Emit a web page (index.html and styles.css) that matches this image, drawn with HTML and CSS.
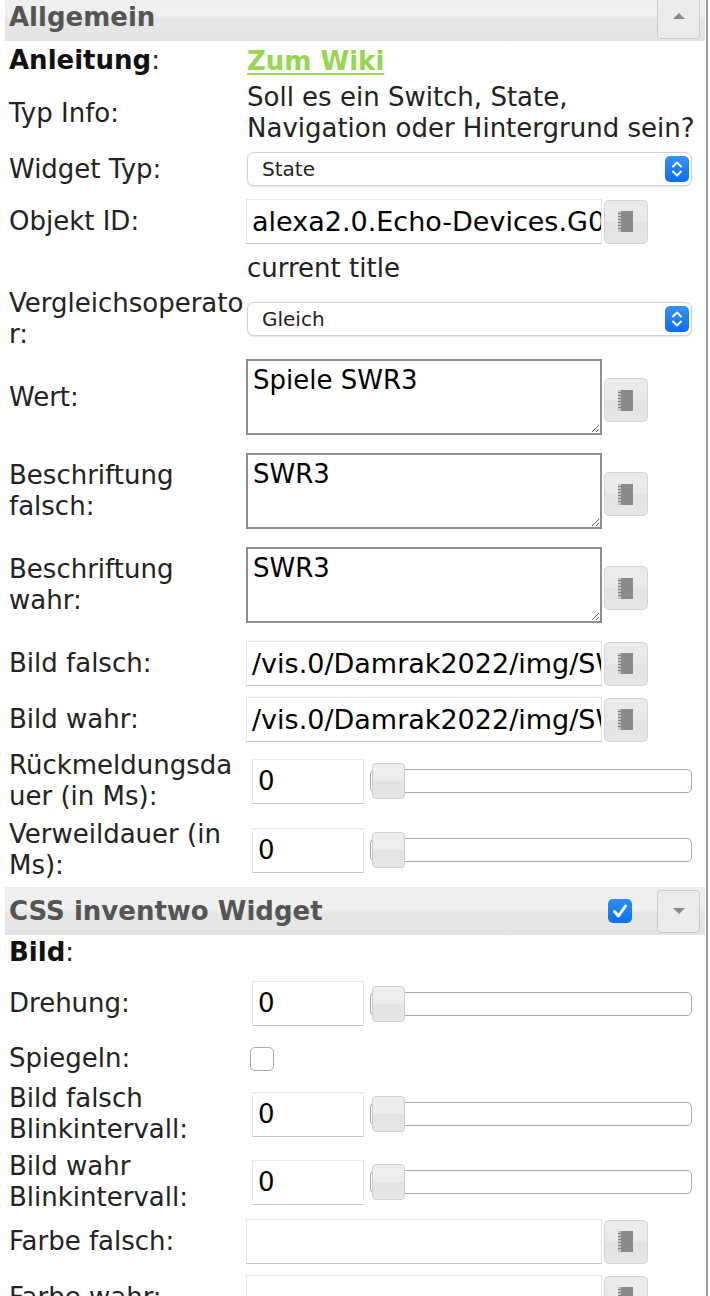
FILE: index.html
```html
<!DOCTYPE html>
<html lang="de">
<head>
<meta charset="utf-8">
<title>Widget Attribute</title>
<link rel="stylesheet" href="styles.css">
</head>
<body>
<div class="page">
  <div class="panel">
    <div class="group-header first">
      <span class="gh-title">Allgemein</span>
      <span class="gh-toggle"><span class="tri tri-up"></span></span>
    </div>

    <div class="row pad-link">
      <div class="lbl"><b>Anleitung</b>:</div>
      <div class="val"><a class="wiki" href="#">Zum Wiki</a></div>
    </div>

    <div class="row pad-2">
      <div class="lbl">Typ Info:</div>
      <div class="val text">Soll es ein Switch, State, Navigation oder Hintergrund sein?</div>
    </div>

    <div class="row pad-6">
      <div class="lbl">Widget Typ:</div>
      <div class="val"><div class="select"><span>State</span><span class="stepper"><svg width="24" height="26" viewBox="0 0 24 26"><polyline points="8,10.5 12,6.5 16,10.5" fill="none" stroke="#fff" stroke-width="2" stroke-linecap="round" stroke-linejoin="round"/><polyline points="8,15.5 12,19.5 16,15.5" fill="none" stroke="#fff" stroke-width="2" stroke-linecap="round" stroke-linejoin="round"/></svg></span></div></div>
    </div>

    <div class="row pad-input">
      <div class="lbl">Objekt ID:</div>
      <div class="val combo"><div class="tinput">alexa2.0.Echo-Devices.G0909A0604150JK0.Player.currentTitle</div><span class="pick"><svg class="book" width="16" height="21" viewBox="0 0 16 21"><rect x="3" y="0" width="12" height="21" fill="#8a8a8a"/><rect x="0" y="0" width="3" height="21" fill="#c4c4c4"/><path d="M0 2.5h3M0 5.5h3M0 8.5h3M0 11.5h3M0 14.5h3M0 17.5h3" stroke="#7e7e7e" stroke-width="1"/></svg></span></div>
    </div>

    <div class="row pad-text">
      <div class="lbl"></div>
      <div class="val text">current title</div>
    </div>

    <div class="row pad-2">
      <div class="lbl">Vergleichsoperator:</div>
      <div class="val"><div class="select"><span>Gleich</span><span class="stepper"><svg width="24" height="26" viewBox="0 0 24 26"><polyline points="8,10.5 12,6.5 16,10.5" fill="none" stroke="#fff" stroke-width="2" stroke-linecap="round" stroke-linejoin="round"/><polyline points="8,15.5 12,19.5 16,15.5" fill="none" stroke="#fff" stroke-width="2" stroke-linecap="round" stroke-linejoin="round"/></svg></span></div></div>
    </div>

    <div class="row pad-area">
      <div class="lbl">Wert:</div>
      <div class="val combo"><textarea class="tarea">Spiele SWR3</textarea><span class="pick pick-area"><svg class="book" width="16" height="21" viewBox="0 0 16 21"><rect x="3" y="0" width="12" height="21" fill="#8a8a8a"/><rect x="0" y="0" width="3" height="21" fill="#c4c4c4"/><path d="M0 2.5h3M0 5.5h3M0 8.5h3M0 11.5h3M0 14.5h3M0 17.5h3" stroke="#7e7e7e" stroke-width="1"/></svg></span></div>
    </div>

    <div class="row pad-area">
      <div class="lbl">Beschriftung falsch:</div>
      <div class="val combo"><textarea class="tarea">SWR3</textarea><span class="pick pick-area"><svg class="book" width="16" height="21" viewBox="0 0 16 21"><rect x="3" y="0" width="12" height="21" fill="#8a8a8a"/><rect x="0" y="0" width="3" height="21" fill="#c4c4c4"/><path d="M0 2.5h3M0 5.5h3M0 8.5h3M0 11.5h3M0 14.5h3M0 17.5h3" stroke="#7e7e7e" stroke-width="1"/></svg></span></div>
    </div>

    <div class="row pad-area">
      <div class="lbl">Beschriftung wahr:</div>
      <div class="val combo"><textarea class="tarea">SWR3</textarea><span class="pick pick-area"><svg class="book" width="16" height="21" viewBox="0 0 16 21"><rect x="3" y="0" width="12" height="21" fill="#8a8a8a"/><rect x="0" y="0" width="3" height="21" fill="#c4c4c4"/><path d="M0 2.5h3M0 5.5h3M0 8.5h3M0 11.5h3M0 14.5h3M0 17.5h3" stroke="#7e7e7e" stroke-width="1"/></svg></span></div>
    </div>

    <div class="row pad-img">
      <div class="lbl">Bild falsch:</div>
      <div class="val combo"><div class="tinput">/vis.0/Damrak2022/img/SWR3.png</div><span class="pick"><svg class="book" width="16" height="21" viewBox="0 0 16 21"><rect x="3" y="0" width="12" height="21" fill="#8a8a8a"/><rect x="0" y="0" width="3" height="21" fill="#c4c4c4"/><path d="M0 2.5h3M0 5.5h3M0 8.5h3M0 11.5h3M0 14.5h3M0 17.5h3" stroke="#7e7e7e" stroke-width="1"/></svg></span></div>
    </div>

    <div class="row pad-img">
      <div class="lbl">Bild wahr:</div>
      <div class="val combo"><div class="tinput">/vis.0/Damrak2022/img/SWR3_an.png</div><span class="pick"><svg class="book" width="16" height="21" viewBox="0 0 16 21"><rect x="3" y="0" width="12" height="21" fill="#8a8a8a"/><rect x="0" y="0" width="3" height="21" fill="#c4c4c4"/><path d="M0 2.5h3M0 5.5h3M0 8.5h3M0 11.5h3M0 14.5h3M0 17.5h3" stroke="#7e7e7e" stroke-width="1"/></svg></span></div>
    </div>

    <div class="row pad-4">
      <div class="lbl">Rückmeldungsdauer (in Ms):</div>
      <div class="val combo"><div class="ninput">0</div><div class="slider"><span class="handle"></span></div></div>
    </div>

    <div class="row pad-3">
      <div class="lbl">Verweildauer (in Ms):</div>
      <div class="val combo"><div class="ninput">0</div><div class="slider"><span class="handle"></span></div></div>
    </div>

    <div class="group-header second">
      <span class="gh-title">CSS inventwo Widget</span>
      <span class="gh-check"><svg width="24" height="24" viewBox="0 0 24 24"><polyline points="6.5,12.5 10.5,17 17.5,7" fill="none" stroke="#fff" stroke-width="3" stroke-linecap="round" stroke-linejoin="round"/></svg></span>
      <span class="gh-toggle"><span class="tri tri-down"></span></span>
    </div>

    <div class="row pad-2">
      <div class="lbl"><b>Bild</b>:</div>
      <div class="val"></div>
    </div>

    <div class="row pad-11">
      <div class="lbl">Drehung:</div>
      <div class="val combo"><div class="ninput">0</div><div class="slider"><span class="handle"></span></div></div>
    </div>

    <div class="row pad-check">
      <div class="lbl">Spiegeln:</div>
      <div class="val"><span class="cbox"></span></div>
    </div>

    <div class="row pad-4">
      <div class="lbl">Bild falsch Blinkintervall:</div>
      <div class="val combo"><div class="ninput">0</div><div class="slider"><span class="handle"></span></div></div>
    </div>

    <div class="row pad-2">
      <div class="lbl">Bild wahr Blinkintervall:</div>
      <div class="val combo"><div class="ninput">0</div><div class="slider"><span class="handle"></span></div></div>
    </div>

    <div class="row pad-color">
      <div class="lbl">Farbe falsch:</div>
      <div class="val combo"><div class="tinput"></div><span class="pick"><svg class="book" width="16" height="21" viewBox="0 0 16 21"><rect x="3" y="0" width="12" height="21" fill="#8a8a8a"/><rect x="0" y="0" width="3" height="21" fill="#c4c4c4"/><path d="M0 2.5h3M0 5.5h3M0 8.5h3M0 11.5h3M0 14.5h3M0 17.5h3" stroke="#7e7e7e" stroke-width="1"/></svg></span></div>
    </div>

    <div class="row pad-color">
      <div class="lbl">Farbe wahr:</div>
      <div class="val combo"><div class="tinput"></div><span class="pick"><svg class="book" width="16" height="21" viewBox="0 0 16 21"><rect x="3" y="0" width="12" height="21" fill="#8a8a8a"/><rect x="0" y="0" width="3" height="21" fill="#c4c4c4"/><path d="M0 2.5h3M0 5.5h3M0 8.5h3M0 11.5h3M0 14.5h3M0 17.5h3" stroke="#7e7e7e" stroke-width="1"/></svg></span></div>
    </div>
  </div>
</div>
</body>
</html>
```

FILE: styles.css
```css
html, body {
  margin: 0;
  padding: 0;
  background: #fff;
}
body {
  font-family: "DejaVu Sans", Verdana, sans-serif;
  color: #222;
  overflow: hidden;
  height: 1296px;
}
.page {
  width: 706px;
  min-height: 1400px;
  border-right: 2px solid #9c9c9c;
}
.panel {
  padding-left: 5px;
  padding-right: 1px;
}

/* group headers */
.group-header {
  height: 48px;
  display: flex;
  align-items: center;
  padding: 0 5px 0 4px;
  background: linear-gradient(#ededed 0%, #f0f0f0 45%, #e6e6e6 55%, #e4e4e4 100%);
}
.group-header.first {
  margin-top: -7px;
}
.group-header.second {
  margin-top: 3px;
}
.gh-title {
  flex: 1;
  font-size: 26px;
  font-weight: bold;
  color: #555;
}
.gh-toggle {
  width: 41px;
  height: 41px;
  border: 1px solid #cacaca;
  border-radius: 4px;
  background: #ececec;
  display: flex;
  align-items: center;
  justify-content: center;
}
.gh-check {
  width: 24px;
  height: 24px;
  border-radius: 5px;
  background: linear-gradient(#2f8dfc, #0b70f2);
  margin-right: 25px;
  display: flex;
}
.tri {
  width: 0;
  height: 0;
  border-left: 6px solid transparent;
  border-right: 6px solid transparent;
}
.tri-up {
  border-bottom: 6px solid #888;
  margin-top: -2px;
}
.tri-down {
  border-top: 6px solid #888;
}

/* rows */
.row {
  display: grid;
  grid-template-columns: 242px 1fr;
  align-items: center;
}
.lbl {
  font-size: 26px;
  line-height: 31px;
  padding: 0 0 0 4px;
  overflow-wrap: anywhere;
  color: #222;
}
.lbl b {
  color: #111;
}
.val {
  min-width: 0;
}
.text {
  font-size: 26px;
  line-height: 31px;
  color: #222;
}
.combo {
  display: flex;
  align-items: center;
}
.wiki {
  font-size: 26px;
  font-weight: bold;
  color: #96d650;
  text-decoration: underline;
  text-decoration-color: #96d650;
  text-underline-offset: 3px;
}

.pad-link { padding: 4px 0; }
.pad-2 { padding: 2px 0; }
.pad-3 { padding: 3px 0; }
.pad-4 { padding: 4px 0; }
.pad-6 { padding: 6px 0; }
.pad-11 { padding: 11px 0; }
.pad-input { padding: 7px 0 6px; }
.pad-text { padding: 3px 0 2px; }
.pad-area { padding: 7px 0 11px; }
.pad-img { padding: 7px 0 4px; }
.pad-check { padding: 6px 0 5px; }
.pad-color { padding: 4px 0 7px; }

/* select */
.select {
  box-sizing: border-box;
  width: 445px;
  height: 34px;
  border: 1px solid #d2d2d2;
  border-radius: 7px;
  background: #fff;
  box-shadow: 0 1px 2px rgba(0,0,0,0.12);
  display: flex;
  align-items: center;
  justify-content: space-between;
  padding: 0 2px 0 14px;
  font-size: 20px;
  color: #222;
}
.stepper {
  width: 24px;
  height: 26px;
  border-radius: 5px;
  background: linear-gradient(#3592fd, #0a6ef2);
  display: flex;
}

/* text input */
.tinput {
  box-sizing: border-box;
  width: 356px;
  height: 45px;
  margin-left: -1px;
  border: 1px solid #e6e6e6;
  border-bottom-color: #c4c4c4;
  background: #fff;
  font-size: 27px;
  line-height: 43px;
  padding-left: 5px;
  white-space: nowrap;
  overflow: hidden;
  color: #000;
}
.pick {
  box-sizing: border-box;
  width: 44px;
  height: 44px;
  margin-left: 2px;
  border: 1px solid #d4d4d4;
  border-radius: 5px;
  background: linear-gradient(#ececec 0%, #e9e9e9 48%, #e2e2e2 52%, #e7e7e7 100%);
  display: flex;
  align-items: center;
  justify-content: center;
}
.pick-area {
  margin-top: 6px;
}
.book {
  display: block;
}

/* textarea */
.tarea {
  box-sizing: border-box;
  width: 356px;
  height: 76px;
  margin: 0 0 0 -1px;
  border: 2px solid #8e8e8e;
  border-radius: 0;
  padding: 4px 5px;
  font-family: "DejaVu Sans", Verdana, sans-serif;
  font-size: 26px;
  line-height: 31px;
  color: #000;
  background: #fff;
  resize: both;
  display: block;
}

/* number + slider */
.ninput {
  box-sizing: border-box;
  width: 112px;
  height: 45px;
  margin-left: 5px;
  border: 1px solid #e8e8e8;
  border-bottom-color: #c4c4c4;
  font-size: 26px;
  line-height: 43px;
  padding-left: 5px;
  color: #000;
  background: #fff;
}
.slider {
  position: relative;
  box-sizing: border-box;
  width: 322px;
  height: 24px;
  margin-left: 6px;
  border: 1px solid #a9a9a9;
  border-radius: 5px;
  background: #fff;
}
.handle {
  position: absolute;
  left: 1px;
  top: -7px;
  box-sizing: border-box;
  width: 33px;
  height: 36px;
  border: 1px solid #cfcfcf;
  border-radius: 4px;
  background: linear-gradient(#efefef 0%, #ececec 48%, #e3e3e3 52%, #e7e7e7 100%);
}

/* checkbox */
.cbox {
  display: block;
  box-sizing: border-box;
  width: 24px;
  height: 24px;
  margin-left: 3px;
  border: 1px solid #a9a9a9;
  border-radius: 5px;
  background: #fff;
}
```
